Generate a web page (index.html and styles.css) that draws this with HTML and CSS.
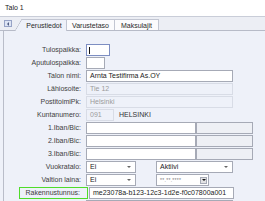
FILE: index.html
```html
<!DOCTYPE html>
<html lang="fi">
<head>
    <meta charset="UTF-8">
    <title>Talo 1</title>
    <link rel="stylesheet" href="styles.css">
</head>
<body>
    <div class="title">Talo 1</div>

    <div class="tabstrip">
        <div class="scrollBtn"><span class="leftArrow"></span></div>
        <div class="tab active">Perustiedot</div>
        <div class="tab">Varustetaso</div>
        <div class="tab">Maksulajit</div>
    </div>

    <div class="panel">
        <div class="row">
            <label>Tulospaikka:</label>
            <div class="field focused w24"><span class="caret"></span></div>
        </div>
        <div class="row">
            <label>Aputulospaikka:</label>
            <div class="field w19"></div>
        </div>
        <div class="row">
            <label>Talon nimi:</label>
            <div class="field wide">Arnta Testifirma As.OY</div>
        </div>
        <div class="row">
            <label>Lähiosoite:</label>
            <div class="field wide disabled">Tie 12</div>
        </div>
        <div class="row">
            <label>PostitoimiPk:</label>
            <div class="field wide disabled">Helsinki</div>
        </div>
        <div class="row">
            <label>Kuntanumero:</label>
            <div class="field w28 disabled">091</div>
            <span class="cityName">HELSINKI</span>
        </div>
        <div class="row">
            <label>1.Iban/Bic:</label>
            <div class="field iban"></div>
            <div class="field bic"></div>
        </div>
        <div class="row">
            <label>2.Iban/Bic:</label>
            <div class="field iban"></div>
            <div class="field bic"></div>
        </div>
        <div class="row">
            <label>3.Iban/Bic:</label>
            <div class="field iban"></div>
            <div class="field bic"></div>
        </div>
        <div class="row">
            <label>Vuokratalo:</label>
            <div class="field select small">Ei<span class="arrow"></span></div>
            <div class="field select status">Aktiivi<span class="arrow"></span></div>
        </div>
        <div class="row">
            <label>Valtion laina:</label>
            <div class="field select small">Ei<span class="arrow"></span></div>
            <div class="field date"><span class="mask">**.**.****</span><span class="dateBtn"><span class="arrow dark"></span></span></div>
        </div>
        <div class="row">
            <label class="highlight">Rakennustunnus:</label>
            <div class="field buildingId">me23078a-b123-12c3-1d2e-f0c07800a001</div>
        </div>
        <div class="row last">
            <label></label>
            <div class="field wide"></div>
        </div>
    </div>
</body>
</html>
```

FILE: styles.css
```css
body {
    margin: 0;
    width: 265px;
    height: 201px;
    overflow: hidden;
    font-family: "Liberation Sans", Arial, sans-serif;
    font-size: 7px;
    color: #404040;
    background: #eef1f9;
}
.title {
    height: 16px;
    line-height: 16px;
    padding-left: 5px;
    background: #fff;
    border-bottom: 1px solid #c9cdd8;
    color: #222;
}
.tabstrip {
    height: 13px;
    display: flex;
    align-items: flex-end;
    padding-left: 4px;
    background: #eceef4;
    border-bottom: 1px solid #b7bbc8;
}
.scrollBtn {
    width: 8px;
    height: 7px;
    box-sizing: border-box;
    margin-bottom: 3px;
    border: 1px solid #97a3c6;
    background: #dde4f4;
    display: flex;
    align-items: center;
    justify-content: center;
}
.leftArrow {
    width: 0;
    height: 0;
    border-top: 2px solid transparent;
    border-bottom: 2px solid transparent;
    border-right: 2px solid #4d5a80;
}
.tab {
    height: 11px;
    line-height: 11px;
    box-sizing: border-box;
    text-align: center;
    background: #fbfbfd;
    border: 1px solid #c2c6d2;
    border-bottom: none;
    border-left: none;
    color: #2a2a2a;
}
.tab:nth-child(3) { width: 48px; }
.tab:nth-child(4) { width: 44px; }
.tab.active {
    position: relative;
    width: 45px;
    margin-left: 10px;
    background: #eef1f9;
    height: 12px;
    margin-bottom: -1px;
}
.tab.active::before {
    content: "";
    position: absolute;
    left: -7px;
    top: -1px;
    width: 7px;
    height: 12px;
    background: linear-gradient(to bottom right, #eceef4 calc(50% - 0.6px), #b7bbc8 50%, #eef1f9 calc(50% + 0.6px));
}
.panel {
    margin-left: 3px;
    border-left: 1px solid #b9bdc9;
    padding-top: 13px;
    height: 157px;
    overflow: hidden;
}
.row {
    height: 13px;
    display: flex;
    align-items: flex-start;
}
.row label {
    width: 77px;
    padding-right: 1px;
    margin-right: 4px;
    text-align: right;
    line-height: 12px;
    flex-shrink: 0;
}
.row label.highlight {
    width: 69px;
    height: 12px;
    margin-left: 15px;
    margin-right: 0;
    padding-right: 7px;
    box-sizing: border-box;
    border: 1.5px solid #4fdc2a;
    line-height: 9px;
}
.field {
    height: 12px;
    box-sizing: border-box;
    line-height: 10px;
    padding: 0 3px;
    border: 1px solid #a6aab6;
    background: #fff;
    color: #222;
    white-space: nowrap;
    overflow: hidden;
    position: relative;
    flex-shrink: 0;
}
.field.focused {
    border-color: #7d8ec2;
}
.caret {
    position: absolute;
    left: 2px;
    top: 2px;
    width: 1px;
    height: 7px;
    background: #111;
}
.field.disabled {
    background: #eef1f9;
    border-color: #d8dce6;
    color: #9b9b9b;
}
.w24 { width: 24px; }
.w19 { width: 19px; }
.w28 { width: 28px; }
.wide { width: 147px; }
.cityName {
    margin-left: 5px;
    line-height: 12px;
    color: #333;
}
.iban { width: 110px; }
.bic {
    width: 57px;
    background: #eef0f5;
}
.select.small {
    width: 50px;
    margin-right: 20px;
}
.select.status {
    width: 77px;
}
.arrow {
    position: absolute;
    right: 4px;
    top: 4px;
    width: 0;
    height: 0;
    border-left: 2px solid transparent;
    border-right: 2px solid transparent;
    border-top: 2px solid #666;
}
.arrow.dark {
    position: static;
    border-top-color: #111;
}
.date {
    width: 53px;
    display: flex;
    align-items: center;
    padding-right: 1px;
}
.mask {
    flex: 1;
    color: #777;
    font-size: 5px;
    letter-spacing: 0.3px;
}
.dateBtn {
    width: 7px;
    height: 7px;
    background: #e2e2e4;
    border: 1px solid #a6aab6;
    box-sizing: border-box;
    display: flex;
    align-items: center;
    justify-content: center;
}
.buildingId {
    width: 145px;
    margin-left: 1px;
}
```
